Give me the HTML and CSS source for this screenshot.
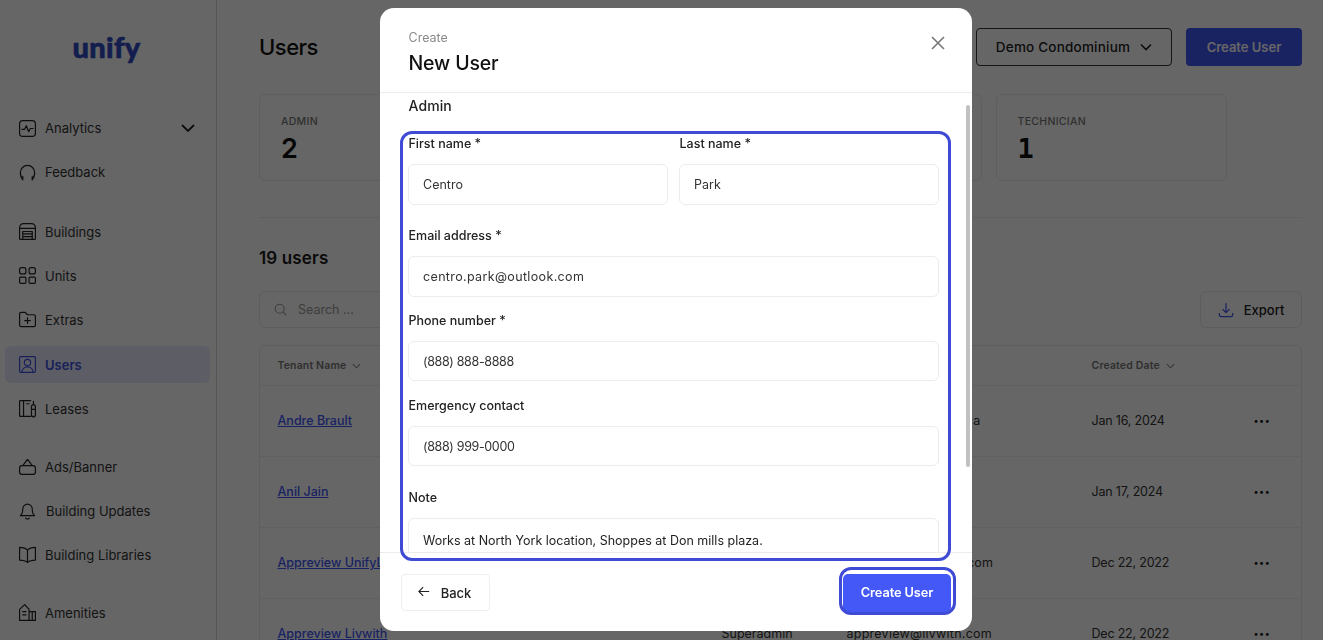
FILE: index.html
```html
<!DOCTYPE html>
<html lang="en">
<head>
<meta charset="utf-8">
<title>Users</title>
<link rel="stylesheet" href="styles.css">
</head>
<body>
<div class="app">
  <aside class="sidebar">
    <div class="logo">unify</div>
    <nav class="nav">
      <div class="nav-group">
        <a class="nav-item"><svg class="ico" viewBox="0 0 24 24"><rect x="2" y="2" width="20" height="20" rx="4"/><path d="M5 13h3.500l2-4.500 3 7.500 2-4h3.500"/></svg><span>Analytics</span><svg class="nav-chevron" viewBox="0 0 14 8"><path d="M1 1l6 6 6-6"/></svg></a>
        <a class="nav-item"><svg class="ico" viewBox="0 0 24 24"><path d="M6 21c-1-1-3-4-3-9a9 9 0 0 1 18 0c0 5-2 8-3 9"/><path d="M6 17v4M18 17v4"/></svg><span>Feedback</span></a>
      </div>
      <div class="nav-group">
        <a class="nav-item"><svg class="ico" viewBox="0 0 24 24"><path d="M2 21V7a5 5 0 0 1 5-5h10a5 5 0 0 1 5 5v14a1 1 0 0 1-1 1H3a1 1 0 0 1-1-1z"/><path d="M2 8h20M6 22V12h12v10M6 15h12M6 18.500h12"/></svg><span>Buildings</span></a>
        <a class="nav-item"><svg class="ico" viewBox="0 0 24 24"><rect x="2" y="2" width="8" height="8" rx="2.500"/><rect x="14" y="2" width="8" height="8" rx="2.500"/><rect x="2" y="14" width="8" height="8" rx="1.500"/><rect x="14" y="14" width="8" height="8" rx="1.500"/></svg><span>Units</span></a>
        <a class="nav-item"><svg class="ico" viewBox="0 0 24 24"><path d="M2 19V5a2 2 0 0 1 2-2h5l3 3h8a2 2 0 0 1 2 2v11a2 2 0 0 1-2 2H4a2 2 0 0 1-2-2z"/><path d="M12 10v7M8.500 13.500h7"/></svg><span>Extras</span></a>
        <a class="nav-item nav-item-active"><svg class="ico" viewBox="0 0 24 24"><rect x="2" y="2" width="20" height="20" rx="1.500"/><circle cx="12" cy="9.500" r="4"/><path d="M5 22c0-4 3-7 7-7s7 3 7 7"/></svg><span>Users</span></a>
        <a class="nav-item"><svg class="ico" viewBox="0 0 24 24"><path d="M16 2H3a1 1 0 0 0-1 1v18a1 1 0 0 0 1 1h13"/><path d="M7 2v20M11 6h3M19.500 7c1.500 0 2.500 1.500 2.500 3v10a2.300 2.300 0 0 1-5 0V10c0-1.500 1-3 2.500-3zM19.500 3v4M17 13h5"/></svg><span>Leases</span></a>
      </div>
      <div class="nav-group">
        <a class="nav-item"><svg class="ico" viewBox="0 0 24 24"><rect x="2" y="11" width="20" height="11" rx="3"/><path d="M6 11l6-8 6 8"/></svg><span>Ads/Banner</span></a>
        <a class="nav-item nav-item-bell"><svg class="ico" viewBox="0 0 24 24"><path d="M6 10a6 6 0 0 1 12 0c0 5 1 7 3 8.500H3C5 17 6 15 6 10z"/><path d="M9.500 21.500a3 3 0 0 0 5 0"/></svg><span>Building Updates</span></a>
        <a class="nav-item"><svg class="ico" viewBox="0 0 24 24"><path d="M12 6.500C10 4 6 3 2 3v16c4 0 8 1 10 3 2-2 6-3 10-3V3c-4 0-8 1-10 3.500zM12 6.500V22"/></svg><span>Building Libraries</span></a>
      </div>
      <div class="nav-group">
        <a class="nav-item"><svg class="ico" viewBox="0 0 24 24"><path d="M2 22V8l6.500-6L14 8v14zM14 11h8v11h-8zM18 11v11M6 11h4M6 15h4M2 22h20"/></svg><span>Amenities</span></a>
      </div>
    </nav>
  </aside>

  <main class="main">
    <header class="topbar">
      <h1 class="page-title">Users</h1>
      <div class="topbar-actions">
        <button class="select-btn" type="button">Demo Condominium <svg class="select-chevron" viewBox="0 0 12 8"><path d="M1 1.500l5 5 5-5"/></svg></button>
        <button class="primary-btn" type="button">Create User</button>
      </div>
    </header>

    <section class="stats">
      <div class="stat"><div class="stat-label">ADMIN</div><div class="stat-value">2</div></div>
      <div class="stat"></div>
      <div class="stat"></div>
      <div class="stat"><div class="stat-label">TECHNICIAN</div><div class="stat-value stat-value-one">1</div></div>
    </section>

    <h2 class="count">19 users</h2>

    <div class="toolbar">
      <div class="search"><svg class="search-ico" viewBox="0 0 16 16"><circle cx="7" cy="7" r="5.500"/><path d="M11.200 11.200L15 15"/></svg><span>Search ...</span></div>
      <button class="export" type="button"><svg class="export-ico" viewBox="0 0 18 18"><path d="M9 1.500v10M5 8l4 4 4-4M1.500 12.500v2a2 2 0 0 0 2 2h11a2 2 0 0 0 2-2v-2"/></svg>Export</button>
    </div>

    <div class="table">
      <div class="row row-head">
        <span>Tenant Name <svg class="sort" viewBox="0 0 10 6"><path d="M1 1l4 4 4-4"/></svg></span><span></span><span></span>
        <span>Created Date <svg class="sort" viewBox="0 0 10 6"><path d="M1 1l4 4 4-4"/></svg></span><span></span>
      </div>
      <div class="row"><a class="name">Andre Brault</a><span></span><span class="email">andre.bra@unifyliv.ca</span><span class="date">Jan 16, 2024</span><span class="more">•••</span></div>
      <div class="row"><a class="name">Anil Jain</a><span></span><span></span><span class="date">Jan 17, 2024</span><span class="more">•••</span></div>
      <div class="row"><a class="name">Appreview UnifyLiving</a><span>Superadmin</span><span class="email">appreview@unifyly.com</span><span class="date">Dec 22, 2022</span><span class="more">•••</span></div>
      <div class="row"><a class="name">Appreview Livwith</a><span>Superadmin</span><span class="email">appreview@livwith.com</span><span class="date">Dec 22, 2022</span><span class="more">•••</span></div>
    </div>
  </main>
</div>

<div class="overlay"></div>

<div class="modal">
  <header class="modal-head">
    <div>
      <div class="modal-kicker">Create</div>
      <div class="modal-title">New User</div>
    </div>
    <svg class="close" viewBox="0 0 14 14"><path d="M1 1l12 12M13 1L1 13"/></svg>
  </header>
  <div class="modal-body">
    <div class="role">Admin</div>
    <div class="form">
      <div class="name-row">
        <label class="field"><span class="label">First name *</span><input class="input" value="Centro"></label>
        <label class="field"><span class="label">Last name *</span><input class="input" value="Park"></label>
      </div>
      <label class="field field-email"><span class="label">Email address *</span><input class="input input-wide" value="centro.park@outlook.com"></label>
      <label class="field"><span class="label">Phone number *</span><input class="input input-short input-tight" value="(888) 888-8888"></label>
      <label class="field field-near"><span class="label">Emergency contact</span><input class="input input-short input-tight" value="(888) 999-0000"></label>
      <label class="field field-far"><span class="label">Note</span><input class="input input-note" value="Works at North York location, Shoppes at Don mills plaza."></label>
    </div>
    <div class="scroll-thumb"></div>
  </div>
  <footer class="modal-foot">
    <button class="back" type="button"><svg class="back-ico" viewBox="0 0 14 12"><path d="M13 6H1.500M6 1L1 6l5 5"/></svg>Back</button>
    <button class="submit" type="button">Create User</button>
  </footer>
  <div class="mark mark-form"></div>
  <div class="mark mark-submit"></div>
</div>
</body>
</html>
```
FILE: styles.css
```css
* { box-sizing: border-box; }
html, body { margin: 0; height: 640px; overflow: hidden; }
body { font-family: Inter, "Liberation Sans", sans-serif; color: #1c1c1c; background: #fff; font-size: 13px; }
button, input { font-family: inherit; }

.app { display: flex; height: 640px; overflow: hidden; }

.sidebar { width: 217px; flex: none; border-right: 1px solid #d5d5d5; padding: 0 6px 0 5px; }
.logo { height: 106px; padding-top: 29px; text-align: center; font-family: Lato, sans-serif; font-weight: 900; font-size: 29px; line-height: 36px; color: #3049c4; letter-spacing: .3px; padding-right: 2px; -webkit-text-stroke: .6px #3049c4; }
.nav { display: flex; flex-direction: column; gap: 14px; }
.nav-group { display: flex; flex-direction: column; }
.nav-group:first-child { margin-bottom: 1.500px; }
.nav-item { display: flex; align-items: center; height: 44px; padding-left: 12.500px; font-size: 13px; color: #333; border-radius: 6px; }
.nav-item .ico { width: 19px; height: 19px; flex: none; margin-right: 8.500px; fill: none; stroke: #222; stroke-width: 1.500; stroke-linecap: round; stroke-linejoin: round; }
.nav-item-bell span { margin-left: 1px; }
.nav-item-active { background: #e6e9fd; color: #3d50e0; font-weight: 600; height: 37px; margin: 4px 0; padding-top: 1px; }
.nav-item-active .ico { stroke: #3d50e0; }
.nav-chevron { width: 14px; height: 8px; margin-left: auto; margin-right: 15px; fill: none; stroke: #222; stroke-width: 1.800; }

.main { flex: 1; min-width: 0; padding: 28px 21px 0 42px; }
.topbar { display: flex; justify-content: space-between; align-items: center; height: 38px; }
.page-title { margin: 0; font-size: 22px; font-weight: 500; color: #111; letter-spacing: -.5px; }
.topbar-actions { display: flex; gap: 14px; }
.select-btn { display: flex; align-items: center; justify-content: center; gap: 10px; width: 196px; height: 38px; background: #fff; border: 1px solid #333; border-radius: 4px; font-size: 13.500px; font-weight: 500; color: #222; letter-spacing: .2px; }
.select-chevron { width: 12px; height: 8px; fill: none; stroke: #222; stroke-width: 1.600; }
.primary-btn { width: 116px; height: 38px; border: 0; border-radius: 4px; background: #4358f6; color: #fff; font-size: 13px; font-weight: 600; }

.stats { display: grid; grid-template-columns: repeat(4, 231.500px); gap: 14px; margin-top: 28px; padding-bottom: 36px; border-bottom: 1px solid #eee; }
.stat { height: 87px; border: 1px solid #ececec; border-radius: 6px; padding: 20px 21px 0; }
.stat-label { font-size: 10.500px; line-height: 13px; font-weight: 500; color: #777; letter-spacing: .3px; }
.stat-value { margin-top: 5px; font-size: 27px; line-height: 32px; font-weight: 600; color: #111; }
.stat-value-one { font-family: "DejaVu Sans Mono", monospace; font-weight: 700; }

.count { margin: 29px 0 0; font-size: 17px; line-height: 22px; font-weight: 600; color: #1a1a1a; letter-spacing: .15px; }

.toolbar { display: flex; justify-content: space-between; margin-top: 22px; }
.search { display: flex; align-items: center; gap: 11px; width: 300px; height: 37px; padding-left: 14px; border: 1px solid #e8e8e8; border-radius: 6px; font-size: 12.500px; color: #9a9a9a; }
.search-ico { width: 13px; height: 13px; fill: none; stroke: #999; stroke-width: 1.300; }
.export { display: flex; align-items: center; justify-content: center; gap: 10px; width: 102px; height: 37px; background: #fff; border: 1px solid #e8e8e8; border-radius: 6px; font-size: 13px; font-weight: 500; color: #222; }
.export-ico { width: 16px; height: 16px; fill: none; stroke: #4358f6; stroke-width: 1.400; }

.table { margin-top: 17px; border: 1px solid #ececec; border-radius: 6px 6px 0 0; }
.row { display: grid; grid-template-columns: 444px 125px 245px 162px 1fr; align-items: center; height: 71px; padding-left: 17.500px; border-top: 1px solid #f0f0f0; font-size: 12.500px; color: #333; }
.row-head { height: 38.500px; border-top: 0; font-size: 10.500px; font-weight: 600; color: #777; letter-spacing: .15px; }
.sort { width: 9px; height: 6px; margin-left: 3px; fill: none; stroke: #888; stroke-width: 1.200; }
.name { color: #4358f6; text-decoration: underline; font-weight: 500; white-space: nowrap; }
.email { letter-spacing: .25px; }
.date { letter-spacing: -.2px; }
.more { font-size: 9px; letter-spacing: .5px; color: #111; }

.overlay { position: fixed; inset: 0; background: rgba(0, 0, 0, .6); }

.modal { position: fixed; left: 380px; top: 8px; width: 592px; height: 623px; display: flex; flex-direction: column; background: #fff; border-radius: 14px; overflow: hidden; }
.modal-head { flex: none; display: flex; justify-content: space-between; height: 85px; padding: 22px 27px 0 28.500px; border-bottom: 1px solid #ececec; }
.modal-kicker { font-size: 12.500px; line-height: 16px; color: #8a8a8a; }
.modal-title { margin-top: 4px; font-size: 19.500px; line-height: 26px; font-weight: 500; color: #111; letter-spacing: -.15px; }
.close { width: 14px; height: 14px; margin-top: 6px; fill: none; stroke: #777; stroke-width: 1.600; }

.modal-body { position: relative; flex: none; height: 459px; padding: 4px 33px 0 28px; overflow: hidden; }
.role { font-size: 14px; line-height: 18px; font-weight: 500; color: #222; letter-spacing: .1px; padding-left: .5px; }
.form { display: flex; flex-direction: column; gap: 15px; margin-top: 20px; }
.name-row { display: grid; grid-template-columns: 260px 260px; gap: 11px; }
.field { display: flex; flex-direction: column; gap: 11px; }
.field-email { margin-top: 7px; }
.field-far { margin-top: 8px; }
.field-near { margin-top: 1px; }
.label { font-size: 12.500px; line-height: 18px; font-weight: 500; color: #222; padding-left: .5px; }
.input { width: 100%; height: 41px; padding: 0 14px; border: 1px solid #ececec; border-radius: 6px; background: #fff; font-size: 12.500px; color: #333; outline: 0; }
.input-wide { letter-spacing: .35px; }
.input-tight { letter-spacing: -.35px; }
.input-short { height: 40px; }
.input-note { height: 44px; color: #222; }
.scroll-thumb { position: absolute; top: 12px; right: 2px; width: 4px; height: 362px; border-radius: 2px; background: #c1c1c1; }

.modal-foot { flex: 1; display: flex; justify-content: space-between; align-items: flex-start; padding: 21px 21px 0; border-top: 1px solid #ececec; }
.back { display: flex; align-items: center; justify-content: center; gap: 11px; width: 89px; height: 37px; padding-right: 8px; background: #fff; border: 1px solid #eee; border-radius: 4px; font-size: 13px; font-weight: 500; color: #222; }
.back-ico { width: 12px; height: 11px; margin-top: -3px; fill: none; stroke: #222; stroke-width: 1.300; }
.submit { width: 108px; height: 38px; padding-bottom: 2px; border: 0; border-radius: 5px; background: #4358f6; color: #fff; font-size: 12.800px; font-weight: 600; letter-spacing: -.1px; }

.mark { position: absolute; border: 3px solid #3f4bd4; pointer-events: none; }
.mark-form { left: 20px; top: 123px; width: 551px; height: 430px; border-radius: 12px; }
.mark-submit { left: 459px; top: 559px; width: 117px; height: 48px; border-radius: 12px; }
```
